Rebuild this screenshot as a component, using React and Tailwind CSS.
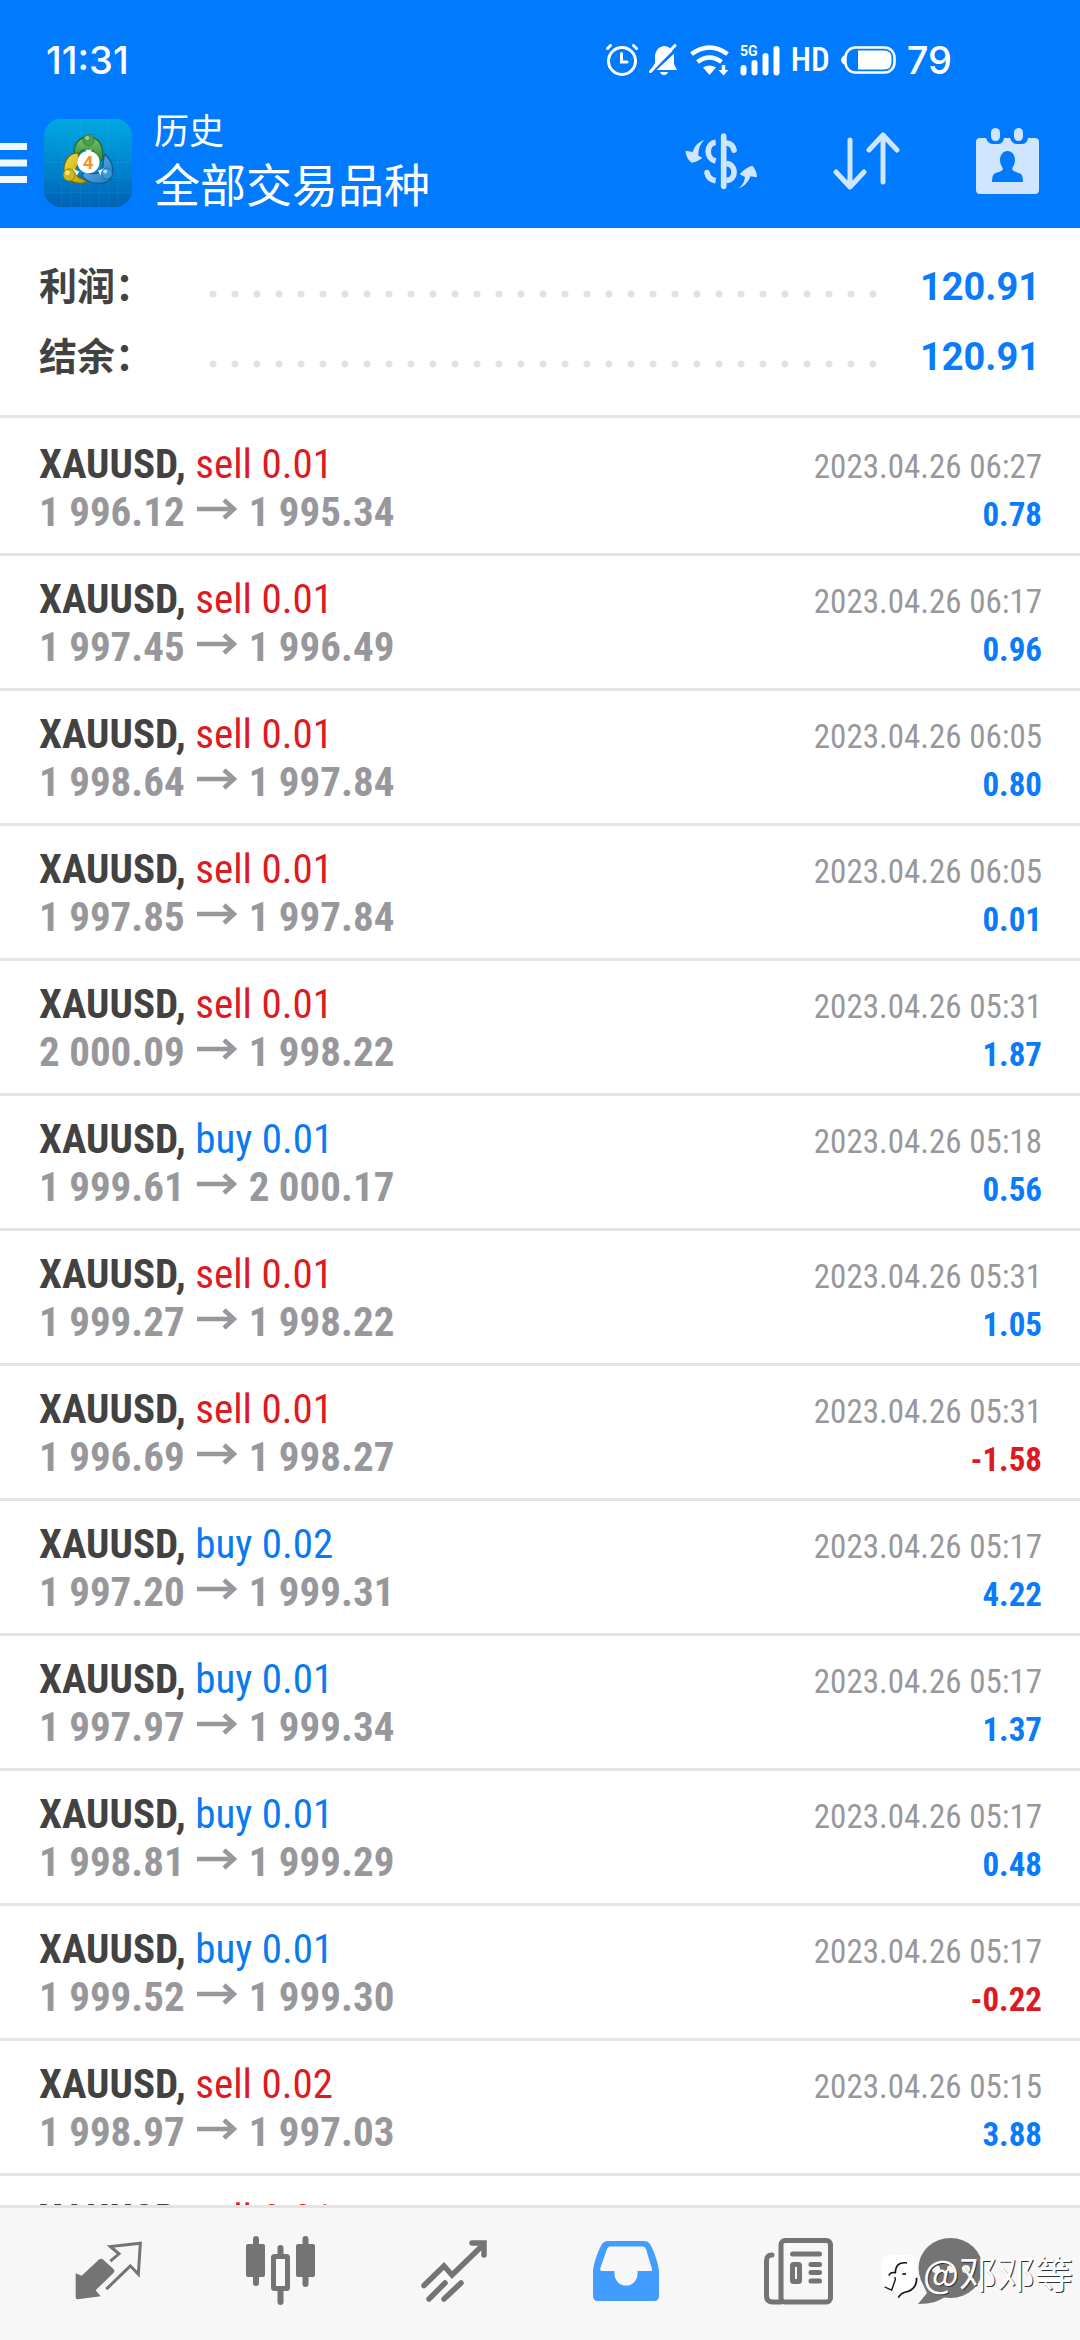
const TRADES = [
  { side: "sell", lots: "0.01", open: "1 996.12", close: "1 995.34", time: "2023.04.26 06:27", profit: "0.78" },
  { side: "sell", lots: "0.01", open: "1 997.45", close: "1 996.49", time: "2023.04.26 06:17", profit: "0.96" },
  { side: "sell", lots: "0.01", open: "1 998.64", close: "1 997.84", time: "2023.04.26 06:05", profit: "0.80" },
  { side: "sell", lots: "0.01", open: "1 997.85", close: "1 997.84", time: "2023.04.26 06:05", profit: "0.01" },
  { side: "sell", lots: "0.01", open: "2 000.09", close: "1 998.22", time: "2023.04.26 05:31", profit: "1.87" },
  { side: "buy", lots: "0.01", open: "1 999.61", close: "2 000.17", time: "2023.04.26 05:18", profit: "0.56" },
  { side: "sell", lots: "0.01", open: "1 999.27", close: "1 998.22", time: "2023.04.26 05:31", profit: "1.05" },
  { side: "sell", lots: "0.01", open: "1 996.69", close: "1 998.27", time: "2023.04.26 05:31", profit: "-1.58" },
  { side: "buy", lots: "0.02", open: "1 997.20", close: "1 999.31", time: "2023.04.26 05:17", profit: "4.22" },
  { side: "buy", lots: "0.01", open: "1 997.97", close: "1 999.34", time: "2023.04.26 05:17", profit: "1.37" },
  { side: "buy", lots: "0.01", open: "1 998.81", close: "1 999.29", time: "2023.04.26 05:17", profit: "0.48" },
  { side: "buy", lots: "0.01", open: "1 999.52", close: "1 999.30", time: "2023.04.26 05:17", profit: "-0.22" },
  { side: "sell", lots: "0.02", open: "1 998.97", close: "1 997.03", time: "2023.04.26 05:15", profit: "3.88" },
  { side: "sell", lots: "0.01" },
];

const SUMMARY = [
  { label: "利润：", value: "120.91" },
  { label: "结余：", value: "120.91" },
];

function StatusBar() {
  return (
    <div className="flex h-[106px] items-center justify-between pt-[14px] pl-[46px] pr-[128px] font-['Inter',sans-serif] text-[38px] font-medium">
      <span>11:31</span>
      <div className="flex items-center gap-[11px]">
        {/* alarm */}
        <svg width="32" height="32" viewBox="0 0 32 32" fill="none" stroke="currentColor" strokeLinecap="round">
          <circle cx="16" cy="17" r="13.5" strokeWidth="3" />
          <path d="M15.5 9.5V18H21" strokeWidth="3" />
          <path d="M1.5 4.5L4.5 1.5M30.500 4.500L27.500 1.500" strokeWidth="3" />
        </svg>
        {/* muted bell */}
        <svg width="30" height="32" viewBox="0 0 30 32">
          <path d="M15 2C9 3 6 7 6 13V19L2 26H28L25 20V11C24 6 20 2 15 2Z" fill="currentColor" />
          <path d="M11 28H19Q18 31 15 31Q12 31 11 28Z" fill="currentColor" />
          <path d="M0 31L29 4" stroke="#007aff" strokeWidth="3" />
          <path d="M1.500 27.500L26 1.500" stroke="currentColor" strokeWidth="3" strokeLinecap="round" />
        </svg>
        {/* wifi */}
        <svg width="39" height="31" viewBox="0 0 39 31" fill="none" stroke="currentColor">
          <path d="M1.500 9Q19.500-4 37.500 9" strokeWidth="4.500" />
          <path d="M7.500 17Q19.500 8 31.500 17" strokeWidth="4.500" />
          <path d="M13 22.500Q19.500 18.500 26 22.500L19.500 30Z" fill="currentColor" stroke="none" />
          <path d="M33.500 20V26" strokeWidth="3.500" />
          <path d="M28.500 25H38.500L33.500 30.500Z" fill="currentColor" stroke="none" />
        </svg>
        {/* signal */}
        <svg width="40" height="31" viewBox="0 0 40 31" stroke="currentColor" strokeLinecap="round" className="overflow-visible">
          <text x="0" y="11" fontSize="14" fontWeight="700" fontFamily="Roboto, sans-serif" fill="currentColor" stroke="none">
            5G
          </text>
          <path d="M3.500 23V27.500M14.500 18V27.500M25.500 11V27.500M36.500 4V27.500" strokeWidth="6" />
        </svg>
        <span className="font-['Roboto_Condensed',sans-serif] text-[33px] font-medium">HD</span>
        {/* battery */}
        <svg width="55" height="28" viewBox="0 0 55 28">
          <rect x="4.500" y="1.500" width="49" height="25" rx="10" fill="none" stroke="currentColor" strokeWidth="2.500" />
          <path d="M4 9Q0 11 0 14Q0 17 4 19Z" fill="currentColor" />
          <path d="M17 4.500H43Q50.500 4.500 50.500 12V16Q50.500 23.500 43 23.500H17Z" fill="currentColor" />
        </svg>
        <span>79</span>
      </div>
    </div>
  );
}

function AppLogo() {
  return (
    <svg width="88" height="88" viewBox="42 55 263 263">
      <defs>
        <linearGradient id="sky" x1="0" y1="0" x2="0" y2="1">
          <stop offset="0" stopColor="#00a9e2" />
          <stop offset="0.5" stopColor="#0087d0" />
          <stop offset="1" stopColor="#0062b4" />
        </linearGradient>
        <linearGradient id="leaf" x1="0" y1="0" x2="0" y2="1">
          <stop offset="0" stopColor="#7cc46a" />
          <stop offset="1" stopColor="#2b7d2f" />
        </linearGradient>
        <linearGradient id="gold" x1="0" y1="0" x2="1" y2="1">
          <stop offset="0" stopColor="#f2df45" />
          <stop offset="1" stopColor="#b89a08" />
        </linearGradient>
        <linearGradient id="aqua" x1="0" y1="0" x2="1" y2="1">
          <stop offset="0" stopColor="#6cc0ee" />
          <stop offset="1" stopColor="#2277bd" />
        </linearGradient>
      </defs>
      <rect x="42" y="55" width="263" height="263" rx="50" fill="url(#sky)" />
      <path
        d="M95 57V316M123 56V317M151 55V318M179 55V318M207 55V318M235 56V317M263 58V315M43 95H304M43 140H304M43 185H304M43 230H304M43 274H304"
        stroke="#35b5e8"
        strokeOpacity="0.25"
        strokeWidth="2"
      />
      <path d="M133 165C128 130 148 108 175 108C205 108 222 135 217 175L203 190C200 160 190 145 175 145C158 145 150 150 145 162Z" fill="url(#leaf)" stroke="#1f6b3a" strokeWidth="4" />
      <path d="M145 157C115 155 98 185 102 215C106 240 145 255 172 243L160 235C135 230 130 205 146 190Z" fill="url(#gold)" stroke="#6f6a14" strokeWidth="4" />
      <path d="M222 160C245 175 253 205 243 230C230 254 180 255 155 225L165 210C185 222 205 222 217 205Z" fill="url(#aqua)" stroke="#135a99" strokeWidth="4" />
      <path d="M165 146H186L176 158ZM128 204L148 212L140 224ZM222 202L203 210L212 224Z" fill="#e9f6f2" />
      <circle cx="175" cy="118" r="17" fill="#4b9d4c" stroke="#2b7040" strokeWidth="2" />
      <circle cx="171" cy="112" r="6" fill="#9bd390" />
      <circle cx="117" cy="222" r="18" fill="#cdb71f" stroke="#7d7412" strokeWidth="2" />
      <circle cx="112" cy="216" r="7" fill="#f3e67c" />
      <circle cx="230" cy="218" r="16" fill="#3b97d6" stroke="#1b62a3" strokeWidth="2" />
      <circle cx="225" cy="212" r="6" fill="#a9dcf7" />
      <circle cx="175" cy="184" r="33" fill="#fff" />
      <text x="174" y="204" textAnchor="middle" fontSize="56" fontWeight="700" fontFamily="Roboto, sans-serif" fill="#f29338">
        4
      </text>
    </svg>
  );
}

function Header() {
  return (
    <header className="shrink-0 bg-[#007aff] text-white">
      <StatusBar />
      <div className="flex h-[122px] items-center pr-[41px] pb-2">
        <button aria-label="menu" className="mr-[17px]">
          <svg width="27" height="40" viewBox="0 0 27 40" className="block">
            <path d="M0 3.500H27M0 20H27M0 36.500H27" stroke="#f1f7ff" strokeWidth="7" />
          </svg>
        </button>
        <AppLogo />
        <div className="ml-[22px] flex-1 pb-2 font-['Noto_Sans_CJK_SC',sans-serif]">
          <div className="text-[35px] leading-[46px]">历史</div>
          <h1 className="text-[46px] leading-[60px]">全部交易品种</h1>
        </div>
        <div className="flex items-center gap-[76px] pb-1 text-[#d0e5ff]">
          <button aria-label="currency">
            <svg width="72" height="58" viewBox="18 36 216 168" fill="none" stroke="currentColor" className="block">
              <path d="M134 45V196" strokeWidth="17" strokeLinecap="round" />
              <path d="M110 64C82 67 78 112 110 120" strokeWidth="17" />
              <path d="M142 66C155 67 162 75 165 87" strokeWidth="17" strokeLinecap="round" />
              <path d="M142 128C172 128 174 178 142 178" strokeWidth="17" />
              <path d="M84 154C86 168 96 177 110 179" strokeWidth="17" />
              <circle cx="84" cy="154" r="8" fill="currentColor" stroke="none" />
              <path d="M76 57C60 62 47 73 41 93L20 89C20 104 28 118 38 125C52 123 64 116 70 110L58 104C58 85 62 70 76 57Z" fill="currentColor" stroke="none" />
              <path d="M177 203C190 195 196 183 198 168L182 160C192 148 206 137 220 134C230 144 234 158 234 169L214 166C208 184 195 198 177 203Z" fill="currentColor" stroke="none" />
            </svg>
          </button>
          <button aria-label="sort">
            <svg width="67" height="58" viewBox="0 0 67 58" fill="none" stroke="currentColor" strokeWidth="5" strokeLinecap="round" strokeLinejoin="round" className="block">
              <path d="M17 8V54M3 40L17 55L31 40" />
              <path d="M50 50V4M36 18L50 3L64 18" />
            </svg>
          </button>
          <button aria-label="period">
            <svg width="63" height="66" viewBox="0 0 63 66" className="block">
              <path d="M4 10H10Q12 16 17 16H22Q27 16 28 10H34Q36 16 41 16H46Q51 16 52 10H59Q63 10 63 14V62Q63 66 59 66H4Q0 66 0 62V14Q0 10 4 10Z" fill="currentColor" />
              <rect x="15" y="0" width="9" height="13" rx="4.500" fill="currentColor" />
              <rect x="38" y="0" width="9" height="13" rx="4.500" fill="currentColor" />
              <path d="M31.500 23C36 23 39 27 39 32C39 36 37 38 36 41C37 44 42 44 45 46Q47 48 47 54H16Q16 48 18 46C21 44 26 44 27 41C26 38 24 36 24 32C24 27 27 23 31.500 23Z" fill="#007aff" />
            </svg>
          </button>
        </div>
      </div>
    </header>
  );
}

function Summary() {
  return (
    <section className="border-b-[3px] border-[#e4e4e4] pt-6 pb-[23px] pl-[39px] pr-[40px]">
      {SUMMARY.map((item) => (
        <div key={item.label} className="flex h-[70px] items-center">
          <span className="w-[163px] pb-2 font-['Noto_Sans_CJK_SC',sans-serif] text-[38px] font-bold text-[#424242]">{item.label}</span>
          <span className="mt-3.5 mr-[40px] h-[22px] flex-1 bg-[radial-gradient(circle,#e2e2e2_3px,transparent_4px)] bg-[length:22px_22px]" />
          <span className="font-['Roboto',sans-serif] text-[38px] font-bold text-[#0a7bfa]">{item.value}</span>
        </div>
      ))}
    </section>
  );
}

function TradeRow({ trade }) {
  const loss = trade.profit?.startsWith("-");

  return (
    <li className="border-b-[3px] border-[#e4e4e4] pt-[19px] pb-[17px] pl-[39px] pr-[38px]">
      <div className="flex h-12 items-baseline justify-between">
        <div className="text-[41px] leading-[48px]">
          <span className="font-bold text-[#424242]">XAUUSD, </span>
          <span className={trade.side === "sell" ? "text-[#dd1a21]" : "text-[#0a7af0]"}>
            {trade.side} {trade.lots}
          </span>
        </div>
        <time className="text-[33px] leading-[48px] text-[#98989c]">{trade.time}</time>
      </div>
      {trade.profit && (
        <div className="flex h-12 items-baseline justify-between">
          <div className="flex items-baseline text-[41px] leading-[48px] font-bold text-[#98989c]">
            <span>{trade.open}</span>
            <svg width="40" height="22" viewBox="0 0 40 22" fill="none" stroke="currentColor" strokeWidth="4.5" className="mx-3 mb-1.5 self-center">
              <path d="M0 11H37M27 2L37 11L27 20" />
            </svg>
            <span>{trade.close}</span>
          </div>
          <span className={loss ? "text-[33px] leading-[48px] font-bold text-[#dd1a21]" : "text-[33px] leading-[48px] font-bold text-[#0a7bfa]"}>
            {trade.profit}
          </span>
        </div>
      )}
    </li>
  );
}

function TabBar() {
  return (
    <nav className="grid shrink-0 grid-cols-6 items-center border-t-[3px] border-[#e4e4e4] bg-[#f7f7f7] px-[22px] pt-7 pb-[34px] text-[#747474]">
      <button aria-label="quotes" className="flex justify-center">
        <svg width="70" height="62" viewBox="40 65 210 185">
          <path d="M48 164L66 172L118 123Q125 118 131 124L162 152Q166 158 162 163L108 215L123 233L54 242Q48 242 48 236Z" fill="currentColor" />
          <path d="M152 128L178 106L152 84L242 74L236 167L212 142L140 212" fill="none" stroke="currentColor" strokeWidth="9" />
        </svg>
      </button>
      <button aria-label="charts" className="flex justify-center">
        <svg width="69" height="70" viewBox="0 0 69 70" fill="currentColor">
          <rect x="0" y="8" width="19" height="33" rx="2" />
          <rect x="7" y="0" width="6" height="50" rx="3" />
          <rect x="50" y="8" width="19" height="33" rx="2" />
          <rect x="56.500" y="0" width="6" height="51" rx="3" />
          <rect x="27.500" y="20.500" width="14" height="32" rx="1" fill="none" stroke="currentColor" strokeWidth="5" />
          <rect x="31.500" y="9" width="6" height="12" rx="3" />
          <rect x="31.500" y="53" width="6" height="16" rx="3" />
        </svg>
      </button>
      <button aria-label="trade" className="flex justify-center">
        <svg width="66" height="62" viewBox="0 0 66 62" fill="none" stroke="currentColor" strokeWidth="5.500" strokeLinecap="round">
          <path d="M3 45.500L23 26L31 35L62 5" />
          <path d="M51 3H63V15" />
          <path d="M8 59L24 43M23 59L40 43" />
        </svg>
      </button>
      <button aria-label="history" aria-current="page" className="flex justify-center text-[#429dff]">
        <svg width="66" height="60" viewBox="0 0 66 60">
          <path
            d="M0 55V30C1 20 6 8 9 3Q11 0 15 0H51Q55 0 57 3C60 8 65 20 66 30V55Q66 60 61 60H5Q0 60 0 55ZM17 5.500Q15 5.500 14 8L7 28Q7 30 9 30H21.500V33A11.500 11.500 0 0 0 44.500 33V30H57Q60 30 59 28L53 8Q52 5.500 50 5.500Z"
            fill="currentColor"
            fillRule="evenodd"
          />
        </svg>
      </button>
      <button aria-label="news" className="flex justify-center">
        <svg width="69" height="67" viewBox="0 0 69 67" fill="none" stroke="currentColor" strokeWidth="5" strokeLinecap="round">
          <rect x="17" y="2.500" width="49.500" height="61.500" rx="4" />
          <path d="M8 17C4 17 2.500 19 2.500 23V58C2.500 62 5 64 9 64H17" />
          <path d="M28.500 16H55.500M47 26.500H55.500M47 34.500H55.500M47 43H55.500" />
          <rect x="28.500" y="26.500" width="7" height="17" rx="1" />
        </svg>
      </button>
      <button aria-label="messages" className="flex justify-center">
        <svg width="107" height="67" viewBox="0 0 107 67">
          <ellipse cx="32.500" cy="30" rx="32" ry="30" fill="currentColor" />
          <path d="M2 40L9 55L0 66C13 66 22 63 28 58Z" fill="currentColor" />
          <g fill="#f7f7f7">
            <circle cx="18" cy="31" r="4" />
            <circle cx="33" cy="31" r="4" />
            <circle cx="48" cy="31" r="4" />
          </g>
        </svg>
      </button>
    </nav>
  );
}

function Watermark() {
  return (
    <div className="absolute right-[7px] bottom-[36px] flex items-center gap-1 text-white">
      <svg width="40" height="46" viewBox="50 116 120 138" fill="none" stroke="#111" strokeWidth="5">
        <path d="M82 122H140Q163 122 163 150V190C163 225 140 232 122 236L108 250L108 236L75 218Q57 205 57 180V150Q57 122 82 122Z" fill="#fff" stroke="none" />
        <path d="M80 184C82 174 92 174 99 175C100 154 110 142 134 146" />
        <path d="M120 179H131" />
        <path d="M67 218L88 227L99 196L98 188" strokeWidth="4" />
        <path d="M163 190C163 222 146 230 130 233Q116 236 108 250" />
      </svg>
      <span className="pb-2 font-['Noto_Sans_CJK_SC',sans-serif] text-[38px] leading-[48px] [text-shadow:1px_1px_0_#333]">@邓邓等</span>
    </div>
  );
}

export default function App() {
  return (
    <div className="relative flex h-screen flex-col overflow-hidden bg-white font-['Roboto_Condensed',sans-serif]">
      <Header />
      <main className="min-h-0 flex-1 overflow-hidden">
        <Summary />
        <ul className="pt-[3px]">
          {TRADES.map((trade, i) => (
            <TradeRow key={i} trade={trade} />
          ))}
        </ul>
      </main>
      <TabBar />
      <Watermark />
    </div>
  );
}
